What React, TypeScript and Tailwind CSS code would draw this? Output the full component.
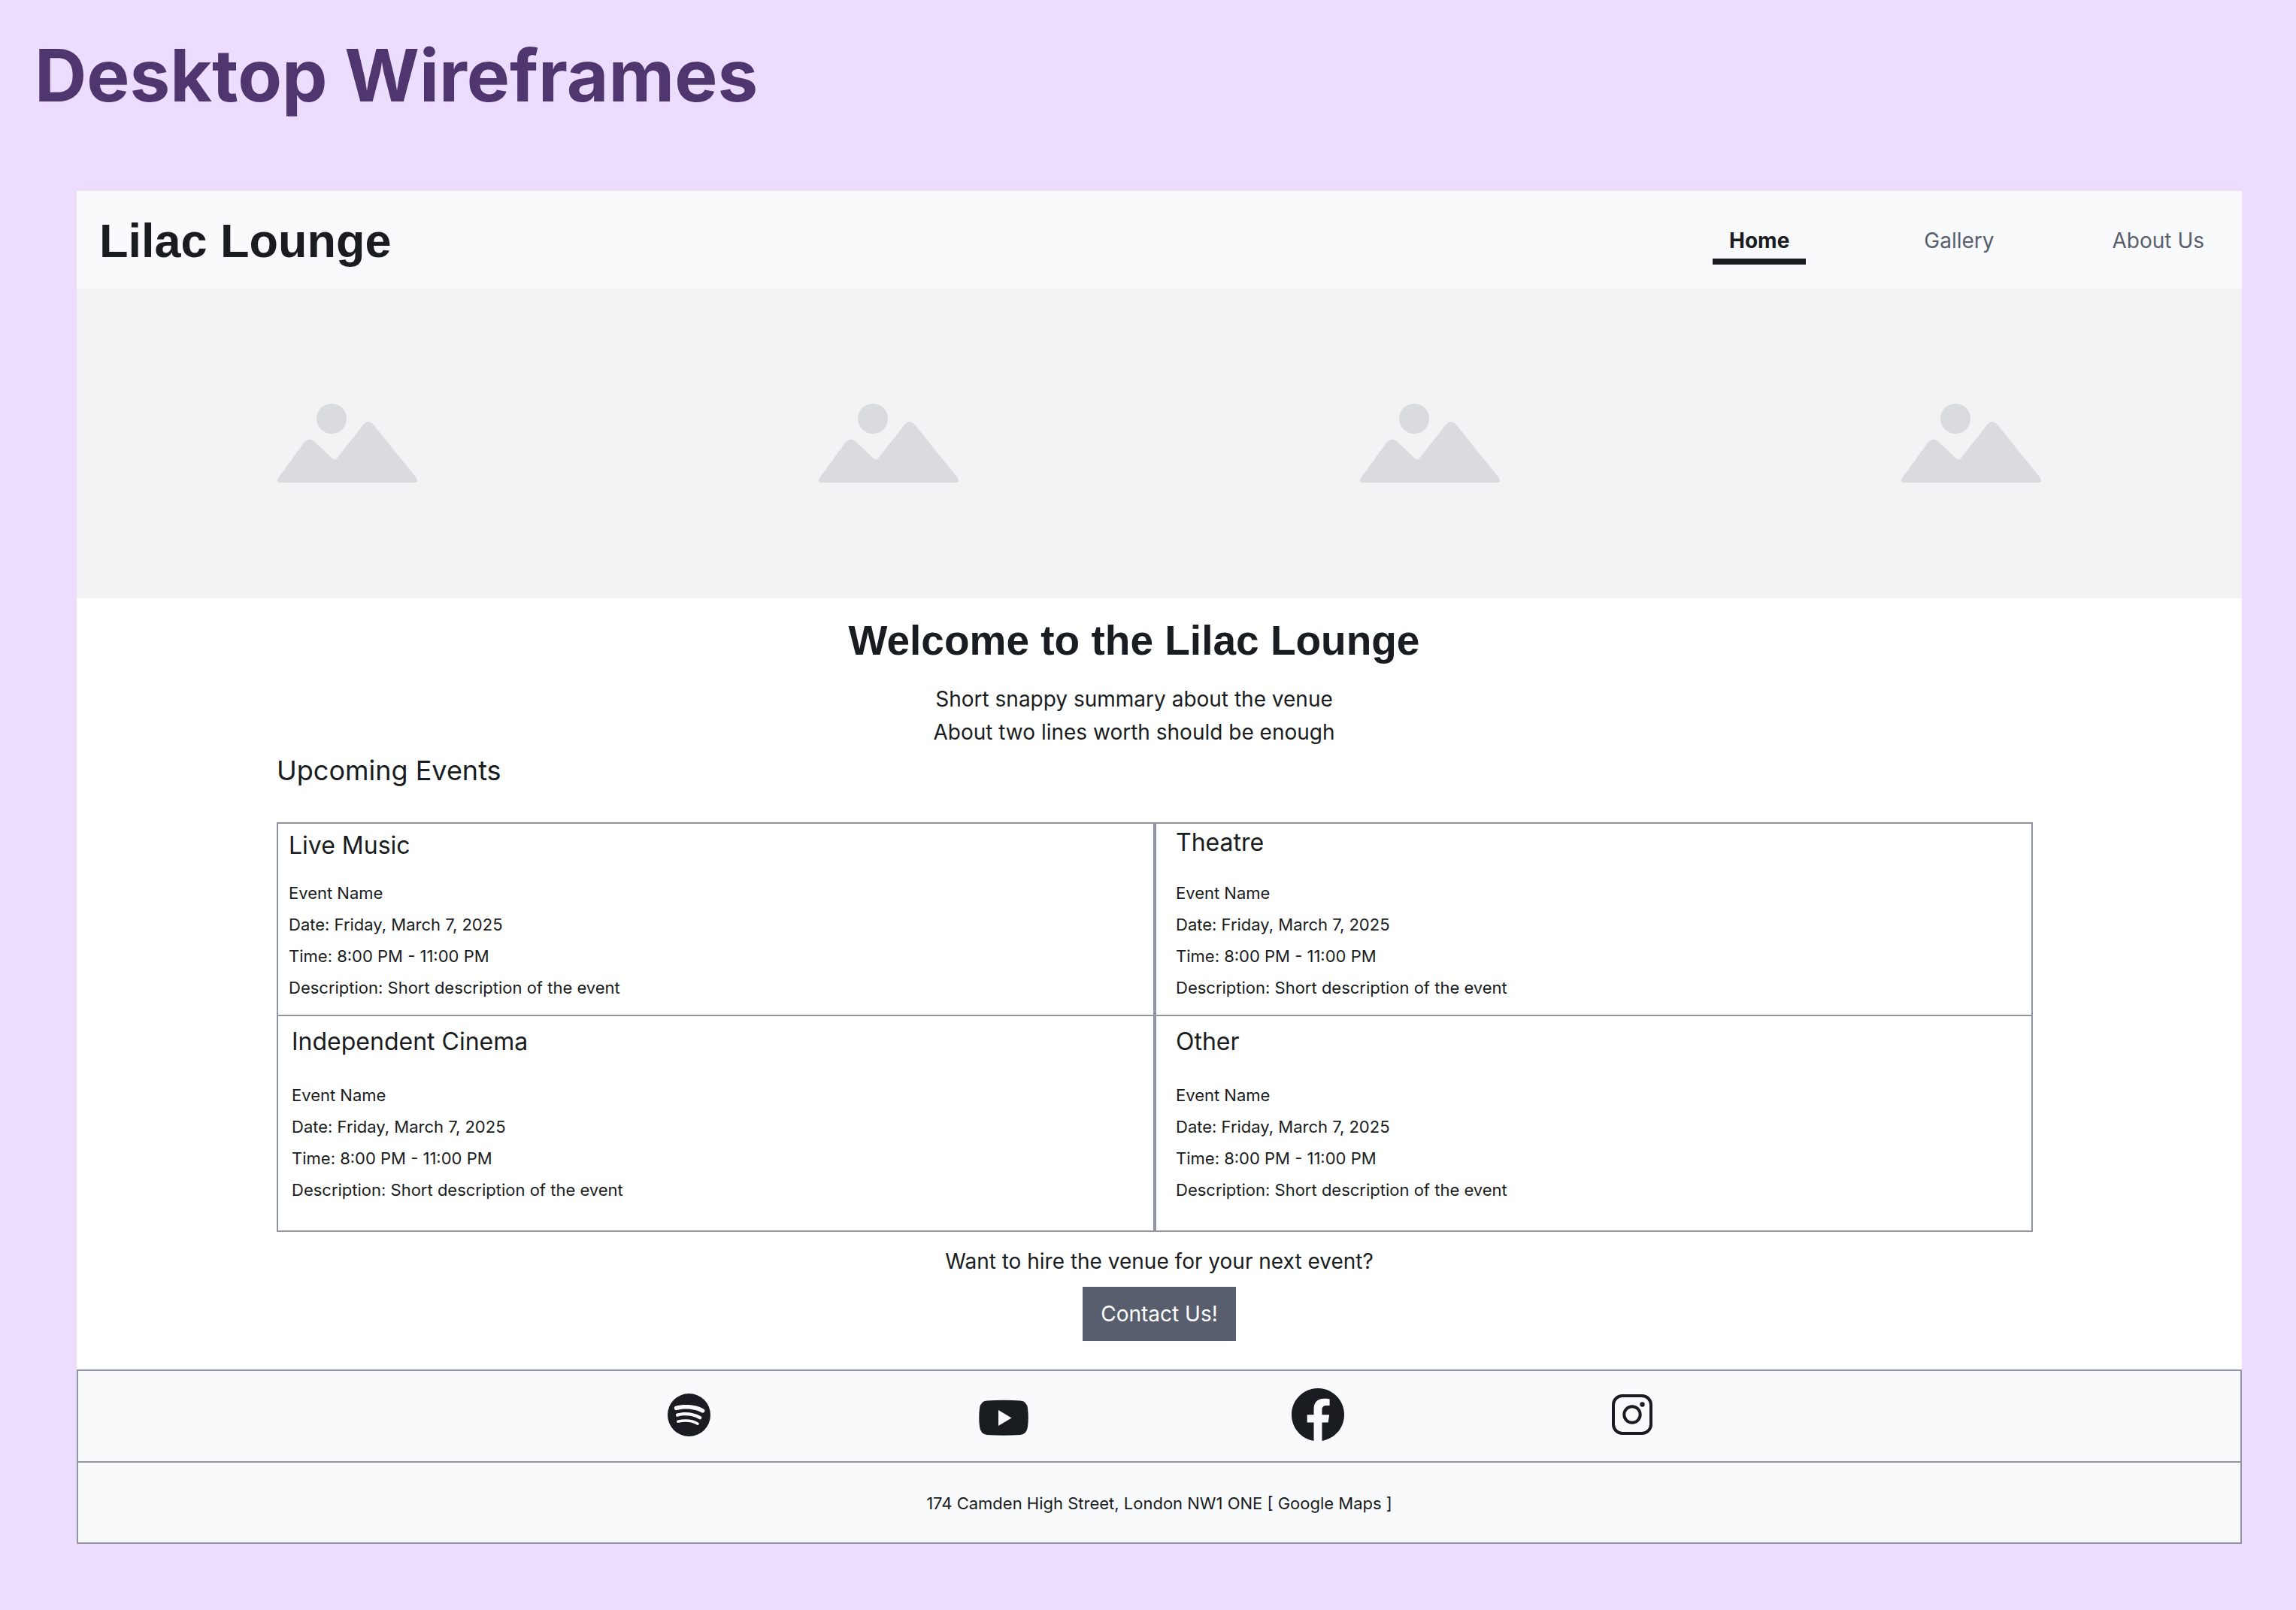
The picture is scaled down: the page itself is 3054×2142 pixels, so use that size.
import { BsFacebook, BsSpotify } from "react-icons/bs";

const navItems = [
  { label: "Home", active: true },
  { label: "Gallery", active: false },
  { label: "About Us", active: false },
];

const details = [
  "Event Name",
  "Date: Friday, March 7, 2025",
  "Time: 8:00 PM - 11:00 PM",
  "Description: Short description of the event",
];

function Placeholder() {
  return (
    <svg viewBox="0 0 186 106" className="h-[106px] w-[186px]" fill="#dadbdf" aria-hidden="true">
      <circle cx="72" cy="20" r="20" />
      <path d="M3 105Q0 105 0 102Q0 101 1 99L36 51Q42 45 49 50L73 73Q76 76 79 73L115 27Q121 21 127 27L185 99Q186 101 186 102Q186 105 183 105Z" />
    </svg>
  );
}

function YoutubeIcon() {
  return (
    <svg viewBox="0 0 66 48" className="h-12 w-[66px]" aria-hidden="true">
      <path
        fill="#191c20"
        fillRule="evenodd"
        d="M11 1.5Q33 0 55 1.5Q64 2 65 12Q66.500 24 65 36Q64 46 55 47Q33 48.500 11 47Q2 46 1 36Q-.5 24 1 12Q2 2 11 1.500ZM26 14V35L43.500 24.500Z"
      />
    </svg>
  );
}

function InstagramIcon() {
  return (
    <svg viewBox="0 0 54 54" className="size-[54px]" fill="none" stroke="#191c20" strokeWidth="4" aria-hidden="true">
      <rect x="2" y="2" width="50" height="50" rx="12" />
      <circle cx="27" cy="27" r="10.700" />
      <circle cx="40.500" cy="13.500" r="3.200" fill="#191c20" stroke="none" />
    </svg>
  );
}

type EventProps = { title: string; className: string; titleClass: string };

function EventCard({ title, className, titleClass }: EventProps) {
  return (
    <article className={className}>
      <h3 className={titleClass}>{title}</h3>
      {details.map((line) => (
        <p key={line} className="text-[22px] leading-[42px]">
          {line}
        </p>
      ))}
    </article>
  );
}

export default function App() {
  return (
    <div className="min-h-screen bg-[#ecddff] pb-[88px] font-['Inter',sans-serif] text-[#191c20]">
      <h1 className="px-[46px] pt-[42px] pb-24 text-[96px] leading-[116px] font-bold text-[#4f366f]">
        Desktop Wireframes
      </h1>
      <div className="mr-[72px] ml-[102px] bg-white">
        <header className="flex h-[130px] items-center justify-between bg-[#f8fafc] pt-0.5 pr-[50px] pl-[30px]">
          <span className="font-['Liberation_Sans',sans-serif] text-[63px] leading-[72px] font-bold">
            Lilac Lounge
          </span>
          <nav className="flex items-center gap-[157px]">
            {navItems.map((item) =>
              item.active ? (
                <a
                  key={item.label}
                  href="#home"
                  aria-current="page"
                  className="border-y-8 border-t-transparent border-b-[#191c20] px-[22px] py-1 text-[28px] leading-10 font-bold"
                >
                  {item.label}
                </a>
              ) : (
                <a key={item.label} href="#page" className="text-[28px] leading-10 text-[#585e6d]">
                  {item.label}
                </a>
              ),
            )}
          </nav>
        </header>

        <div className="grid h-[412px] grid-cols-4 place-items-center bg-[#f3f3f5]">
          <Placeholder />
          <Placeholder />
          <Placeholder />
          <Placeholder />
        </div>

        <main className="px-[266px] pb-[38px]">
          <div className="pt-6 pr-[67px] text-center">
            <h2 className="font-['Liberation_Sans',sans-serif] text-[55px] leading-[64px] font-bold">
              Welcome to the Lilac Lounge
            </h2>
            <p className="pt-6 text-[28px] leading-[44px]">
              Short snappy summary about the venue
              <br />
              About two lines worth should be enough
            </p>
          </div>

          <h2 className="pt-[5px] pb-[45px] text-[36px] leading-[48px]">Upcoming Events</h2>

          <section className="mr-3 grid grid-cols-2 border-2 border-[#9195a2]">
            <EventCard
              title="Live Music"
              className="h-[256px] border-r-2 border-b-2 border-[#9195a2] pl-[14px]"
              titleClass="pt-[7px] pb-5 text-[32px] leading-[44px]"
            />
            <EventCard
              title="Theatre"
              className="h-[256px] border-b-2 border-l-2 border-[#9195a2] pl-[26px]"
              titleClass="pt-[3px] pb-6 text-[32px] leading-[44px]"
            />
            <EventCard
              title="Independent Cinema"
              className="h-[285px] border-r-2 border-[#9195a2] pl-[18px]"
              titleClass="pt-3 pb-7 text-[32px] leading-[44px]"
            />
            <EventCard
              title="Other"
              className="h-[285px] border-l-2 border-[#9195a2] pl-[26px]"
              titleClass="pt-3 pb-7 text-[32px] leading-[44px]"
            />
          </section>

          <div className="flex flex-col items-center gap-3 pt-[17px]">
            <p className="text-[28px] leading-[44px]">Want to hire the venue for your next event?</p>
            <button type="button" className="h-[72px] bg-[#585e6d] px-6 text-[28px] leading-10 text-white">
              Contact Us!
            </button>
          </div>
        </main>

        <footer className="border-2 border-[#9195a2] bg-[#f8fafc]">
          <div className="flex h-[122px] items-center justify-center border-b-2 border-[#9195a2] pb-1 pl-[3px]">
            <div className="grid w-[1672px] grid-cols-4 place-items-center">
              <a href="#spotify" aria-label="Spotify">
                <BsSpotify className="size-[57px]" />
              </a>
              <a href="#youtube" aria-label="YouTube" className="pt-2">
                <YoutubeIcon />
              </a>
              <a href="#facebook" aria-label="Facebook">
                <BsFacebook className="size-[70px]" />
              </a>
              <a href="#instagram" aria-label="Instagram">
                <InstagramIcon />
              </a>
            </div>
          </div>
          <p className="flex h-[106px] items-center justify-center pt-0.5 text-[22px] leading-8 whitespace-pre">
            174 Camden High Street, London NW1 ONE [ <a href="#maps">Google Maps</a> ]
          </p>
        </footer>
      </div>
    </div>
  );
}
